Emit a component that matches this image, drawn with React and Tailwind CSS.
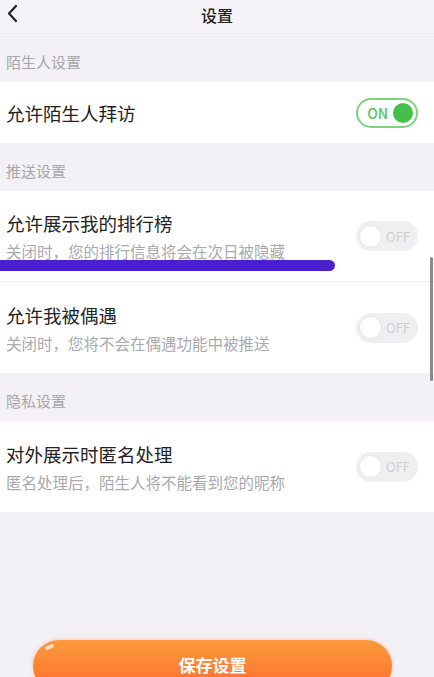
import React from 'react';

const font = { fontFamily: '"Noto Sans CJK SC", "Noto Sans", sans-serif' };

function Toggle({ on }) {
  if (on) {
    return (
      <div className="flex h-[30px] w-[62px] items-center justify-end gap-[5px] rounded-full border-2 border-[#7dd27f] bg-white pr-[3px]">
        <span className="text-[14px] font-medium leading-none text-[#55c25a]">ON</span>
        <span className="h-[20px] w-[20px] rounded-full bg-[#44c04a]" />
      </div>
    );
  }
  return (
    <div className="flex h-[30px] w-[62px] items-center gap-[4px] rounded-full bg-[#efeef1] pl-[3px]">
      <span className="h-[23px] w-[23px] rounded-full border border-[#e4e4e4] bg-white" />
      <span className="text-[13px] leading-none text-[#cfcfd2]">OFF</span>
    </div>
  );
}

function Section({ title }) {
  return (
    <div className="flex h-[48px] items-center px-[6px] pt-[8px] text-[15px] text-[#a7a6ab]">{title}</div>
  );
}

function Row({ title, desc, on, mark, last }) {
  return (
    <div className={`relative flex items-center justify-between bg-white pl-[6px] pr-[16px] ${desc ? 'h-[91px]' : 'h-[61px]'} ${last ? '' : 'border-b border-[#efeef2]'}`}>
      <div className="flex flex-col">
        <div className="text-[18.5px] leading-[24px] text-[#222]">{title}</div>
        {desc && <div className="mt-[6px] text-[15.5px] leading-[20px] text-[#a9a9ad]">{desc}</div>}
      </div>
      <Toggle on={on} />
      {mark && <div className="absolute left-0 top-[69px] h-[11px] w-[335px] rounded-r-full bg-[#4a1fd0]" />}
    </div>
  );
}

export default function App() {
  return (
    <div className="relative h-[677px] w-[434px] overflow-hidden bg-[#f3f1f6]" style={font}>
      <div className="relative flex h-[34px] items-center justify-center border-b border-[#ebe9ee] bg-[#f6f4f8] pb-[4px]">
        <svg className="absolute left-[6px] top-[4px]" width="14" height="20" viewBox="0 0 14 20">
          <path d="M10 2 L3 9.5 L10 17" fill="none" stroke="#222" strokeWidth="2.2" strokeLinecap="round" strokeLinejoin="round" />
        </svg>
        <span className="text-[16px] font-medium text-[#222]">设置</span>
      </div>
      <Section title="陌生人设置" />
      <Row title="允许陌生人拜访" on last />
      <Section title="推送设置" />
      <Row title="允许展示我的排行榜" desc="关闭时，您的排行信息将会在次日被隐藏" mark />
      <Row title="允许我被偶遇" desc="关闭时，您将不会在偶遇功能中被推送" last />
      <Section title="隐私设置" />
      <Row title="对外展示时匿名处理" desc="匿名处理后，陌生人将不能看到您的昵称" last />

      <div className="absolute right-[1px] top-[257px] h-[124px] w-[3px] rounded-full bg-[#8a8a8e]" />

      <div className="absolute left-[33px] top-[640px] flex h-[52px] w-[359px] items-start justify-center rounded-full bg-gradient-to-b from-[#fd9a3c] to-[#fe6a2c] pt-[12px] shadow-[0_0_4px_rgba(255,120,50,0.4)]">
        <span className="text-[17px] font-bold text-white">保存设置</span>
        <span className="absolute left-[12px] top-[5px] h-[4px] w-[9px] -rotate-[25deg] rounded-full bg-white/70" />
      </div>
    </div>
  );
}
